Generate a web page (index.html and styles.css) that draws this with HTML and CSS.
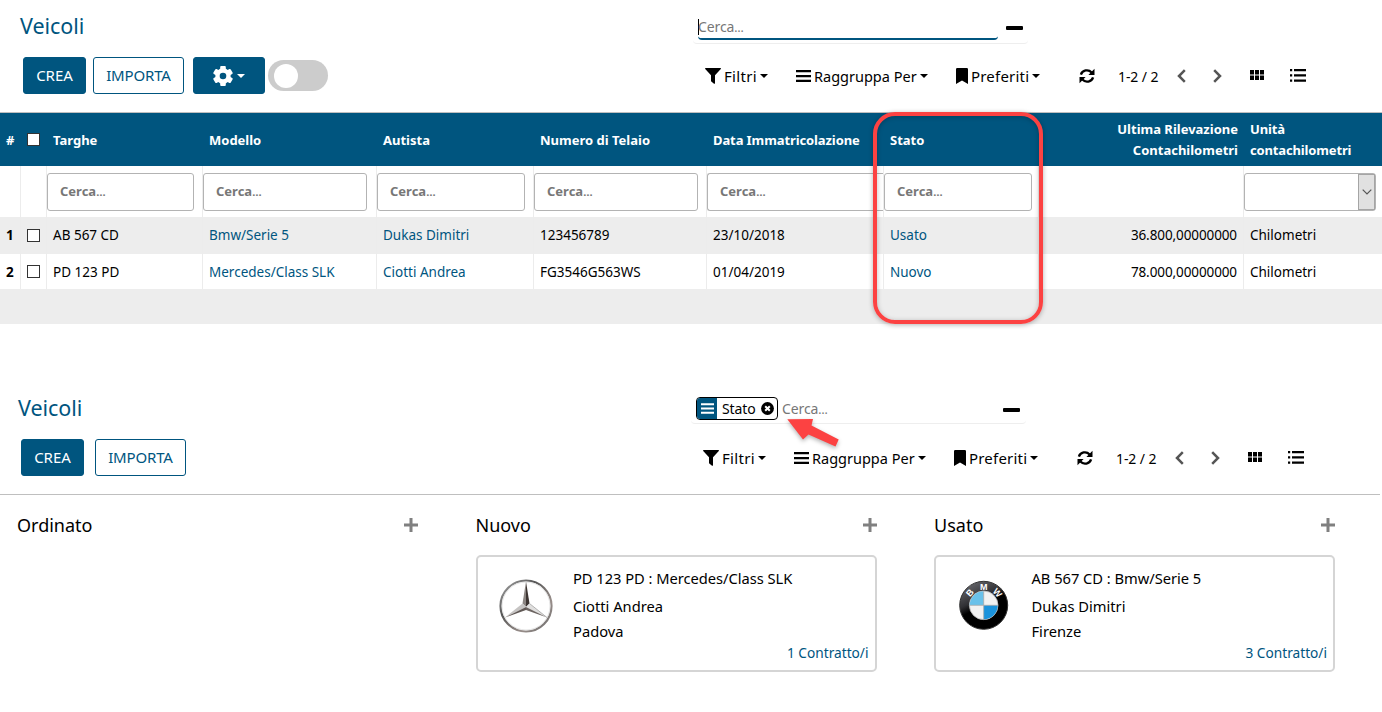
FILE: index.html
```html
<!DOCTYPE html>
<html lang="it">
<head>
<meta charset="utf-8">
<title>Veicoli</title>
<link rel="stylesheet" href="styles.css">
</head>
<body>
<svg class="defs" width="0" height="0">
  <symbol id="funnel" viewBox="0 0 16 16"><path d="M.6 0h14.8q.9.2.4 1L10 7.2V15.200q-.2.8-1 .5L6.300 13.500Q6 13.200 6 12.800V7.200L.2 1Q-.2.2.6 0z"/></symbol>
  <symbol id="bars" viewBox="0 0 15 12"><path d="M0 0h15v2.300H0zM0 4.900h15v2.300H0zM0 9.700h15V12H0z"/></symbol>
  <symbol id="bookmark" viewBox="0 0 12 16"><path d="M1.200 0h9.600Q12 0 12 1.200V16l-6-3.500L0 16V1.200Q0 0 1.200 0z"/></symbol>
  <symbol id="caret" viewBox="0 0 8 4"><path d="M0 0h8L4 4z"/></symbol>
  <symbol id="refresh" viewBox="0 0 16 16"><g fill="none" stroke="currentColor" stroke-width="2.300"><path d="M1.900 6.600A6.200 5.800 0 0 1 12.600 4.400"/><path d="M14.100 9.400A6.200 5.800 0 0 1 3.400 11.600"/></g><path d="M15.500.8v6.100H9.400zM.5 15.200V9.100h6.100z"/></symbol>
  <symbol id="left" viewBox="0 0 9 14"><path d="M7.800 1.200L2 7l5.800 5.800" fill="none" stroke="#555" stroke-width="2.500"/></symbol>
  <symbol id="right" viewBox="0 0 9 14"><path d="M1.200 1.200L7 7l-5.800 5.800" fill="none" stroke="#555" stroke-width="2.500"/></symbol>
  <symbol id="grid" viewBox="0 0 14 10"><path d="M0 0h4v4.500H0zM5 0h4v4.500H5zM10 0h4v4.500h-4zM0 5.500h4V10H0zM5 5.500h4V10H5zM10 5.500h4V10h-4z"/></symbol>
  <symbol id="list" viewBox="0 0 16 13"><path d="M0 0h2.200v2.200H0zM4 0h12v2.200H4zM0 5.300h2.200v2.200H0zM4 5.300h12v2.200H4zM0 10.600h2.200v2.200H0zM4 10.600h12v2.200H4z"/></symbol>
  <symbol id="plus" viewBox="0 0 14 14"><path d="M5.500 0h3v5.500H14v3H8.500V14h-3V8.500H0v-3h5.500z"/></symbol>
</svg>

<section class="list-view">
  <header class="control-panel">
    <div class="panel-left">
      <h1 class="title">Veicoli</h1>
      <div class="buttons">
        <button class="btn btn-primary crea">CREA</button>
        <button class="btn btn-outline importa">IMPORTA</button>
        <button class="btn btn-primary gear">
          <svg width="22" height="22" viewBox="-11 -11 22 22"><g fill="#fff"><circle r="7.700"/><g id="teeth"><rect x="-2.800" y="-10" width="5.600" height="20" rx="1"/><rect x="-2.800" y="-10" width="5.600" height="20" rx="1" transform="rotate(60)"/><rect x="-2.800" y="-10" width="5.600" height="20" rx="1" transform="rotate(120)"/></g></g><circle r="3.300" fill="#00557f"/></svg>
          <svg width="8" height="4"><use href="#caret"/></svg>
        </button>
        <span class="toggle"><span class="knob"></span></span>
      </div>
    </div>
    <div class="panel-right">
      <div class="search">
        <div class="search-input focused"><span class="cursor"></span><span class="ph">Cerca<i>…</i></span></div>
        <span class="minus"></span>
      </div>
      <nav class="toolbar">
        <span class="tool filtri"><svg width="16" height="16"><use href="#funnel"/></svg><b>Filtri</b><svg width="8" height="4"><use href="#caret"/></svg></span>
        <span class="tool raggruppa"><svg width="15" height="12"><use href="#bars"/></svg><b>Raggruppa Per</b><svg width="8" height="4"><use href="#caret"/></svg></span>
        <span class="tool preferiti"><svg width="12" height="16"><use href="#bookmark"/></svg><b>Preferiti</b><svg width="8" height="4"><use href="#caret"/></svg></span>
        <svg class="i-refresh" width="16" height="16"><use href="#refresh"/></svg>
        <span class="pager">1-2 / 2</span>
        <svg class="i-left" width="9" height="14"><use href="#left"/></svg>
        <svg class="i-right" width="9" height="14"><use href="#right"/></svg>
        <svg class="i-grid" width="14" height="10"><use href="#grid"/></svg>
        <svg class="i-list" width="16" height="13"><use href="#list"/></svg>
      </nav>
    </div>
  </header>

  <div class="table">
    <div class="row head">
      <span class="num">#</span><span class="chk"><i class="box"></i></span><span>Targhe</span><span>Modello</span><span>Autista</span><span>Numero di Telaio</span><span class="t-data">Data Immatricolazione</span><span>Stato</span><span class="right">Ultima Rilevazione<br>Contachilometri</span><span class="unit">Unità<br>contachilometri</span>
    </div>
    <div class="row filters">
      <span></span><span></span>
      <span><em class="f w147">Cerca<i>…</i></em></span>
      <span><em class="f w164">Cerca<i>…</i></em></span>
      <span><em class="f w148">Cerca<i>…</i></em></span>
      <span><em class="f w164">Cerca<i>…</i></em></span>
      <span><em class="f w176">Cerca<i>…</i></em></span>
      <span><em class="f w148">Cerca<i>…</i></em></span>
      <span></span>
      <span><em class="select"><span class="drop"><svg width="10" height="6" viewBox="0 0 10 6"><path d="M.7.7L5 5 9.300.7" fill="none" stroke="#555" stroke-width="1.200"/></svg></span></em></span>
    </div>
    <div class="row gray">
      <span class="num">1</span><span class="chk"><i class="box"></i></span><span>AB 567 CD</span><span class="link">Bmw/Serie 5</span><span class="link">Dukas Dimitri</span><span>123456789</span><span>23/10/2018</span><span class="link">Usato</span><span class="right">36.800,00000000</span><span>Chilometri</span>
    </div>
    <div class="row white">
      <span class="num">2</span><span class="chk"><i class="box"></i></span><span>PD 123 PD</span><span class="link">Mercedes/Class SLK</span><span class="link">Ciotti Andrea</span><span>FG3546G563WS</span><span>01/04/2019</span><span class="link">Nuovo</span><span class="right">78.000,00000000</span><span>Chilometri</span>
    </div>
    <div class="row footer"></div>
    <div class="highlight"></div>
  </div>
</section>

<section class="kanban-view">
  <header class="control-panel">
    <div class="panel-left">
      <h1 class="title">Veicoli</h1>
      <div class="buttons">
        <button class="btn btn-primary crea">CREA</button>
        <button class="btn btn-outline importa">IMPORTA</button>
      </div>
    </div>
    <div class="panel-right">
      <div class="search">
        <span class="facet"><span class="facet-icon"><svg width="13" height="11"><use href="#bars"/></svg></span><span class="facet-text">Stato</span><svg width="13" height="13" viewBox="0 0 13 13"><circle cx="6.500" cy="6.500" r="6.400"/><path d="M4.200 4.200l4.600 4.600M8.800 4.200L4.200 8.800" stroke="#fff" stroke-width="2"/></svg></span>
        <div class="search-input"><span class="ph">Cerca<i>…</i></span></div>
        <span class="minus"></span>
      </div>
      <nav class="toolbar">
        <span class="tool filtri"><svg width="16" height="16"><use href="#funnel"/></svg><b>Filtri</b><svg width="8" height="4"><use href="#caret"/></svg></span>
        <span class="tool raggruppa"><svg width="15" height="12"><use href="#bars"/></svg><b>Raggruppa Per</b><svg width="8" height="4"><use href="#caret"/></svg></span>
        <span class="tool preferiti"><svg width="12" height="16"><use href="#bookmark"/></svg><b>Preferiti</b><svg width="8" height="4"><use href="#caret"/></svg></span>
        <svg class="i-refresh" width="16" height="16"><use href="#refresh"/></svg>
        <span class="pager">1-2 / 2</span>
        <svg class="i-left" width="9" height="14"><use href="#left"/></svg>
        <svg class="i-right" width="9" height="14"><use href="#right"/></svg>
        <svg class="i-grid" width="14" height="10"><use href="#grid"/></svg>
        <svg class="i-list" width="16" height="13"><use href="#list"/></svg>
      </nav>
    </div>
    <svg class="arrow" width="60" height="40" viewBox="0 0 60 40"><path d="M3.300 5.300L29 5l-1.500 6.600L54.700 25.500l-3.200 7L24.500 20.500 19 25.500z" fill="#fc4242"/></svg>
  </header>

  <div class="board">
    <div class="column">
      <div class="column-head"><span>Ordinato</span><svg width="14" height="14"><use href="#plus"/></svg></div>
    </div>
    <div class="column">
      <div class="column-head"><span>Nuovo</span><svg width="14" height="14"><use href="#plus"/></svg></div>
      <article class="card">
        <svg class="logo" width="56" height="56" viewBox="-28 -28 56 56">
          <defs><linearGradient id="chrome" x1="0" y1="0" x2="1" y2="1"><stop offset="0" stop-color="#aaa"/><stop offset=".35" stop-color="#555"/><stop offset=".7" stop-color="#998f8b"/><stop offset="1" stop-color="#666"/></linearGradient></defs>
          <circle r="25.500" fill="none" stroke="url(#chrome)" stroke-width="2.200"/>
          <circle r="24" fill="none" stroke="#ddd" stroke-width=".8"/>
          <path d="M0-24.500L-3.500-2.500 0 1z" fill="#8b8582"/><path d="M0-24.500L3.500-2.500 0 1z" fill="#3d3532"/>
          <path d="M-3.500-2.500L0 1-21 11.500z" fill="#c6c4c3"/><path d="M-21 11.500L0 1v3z" fill="#605855"/>
          <path d="M3.500-2.500L0 1 21 11.500z" fill="#e0dfde"/><path d="M21 11.500L0 1v3z" fill="#6d6562"/>
          <path d="M3.500-2.500L21 11.500" stroke="#999" stroke-width=".7"/>
        </svg>
        <div class="info"><p class="name">PD 123 PD : Mercedes/Class SLK</p><p>Ciotti Andrea</p><p>Padova</p><a>1 Contratto/i</a></div>
      </article>
    </div>
    <div class="column">
      <div class="column-head"><span>Usato</span><svg width="14" height="14"><use href="#plus"/></svg></div>
      <article class="card">
        <svg class="logo" width="56" height="56" viewBox="-28 -28 56 56">
          <defs><linearGradient id="ring" x1="0" y1="0" x2=".5" y2="1"><stop offset="0" stop-color="#77777c"/><stop offset=".45" stop-color="#303034"/><stop offset=".6" stop-color="#000"/></linearGradient></defs>
          <g transform="translate(-.300 -.700)">
          <circle r="24" fill="url(#ring)" stroke="#333" stroke-width="1"/>
          <circle r="14.300" fill="#f2f2f2" stroke="#bbb" stroke-width=".8"/>
          <path d="M0 0V-14A14 14 0 0 0-14 0z" fill="#69c1ea"/><path d="M0 0V14A14 14 0 0 0 14 0z" fill="#1b93dc"/>
          <path d="M0-14V14M-14 0H14" stroke="#aaa" stroke-width=".8"/>
          <g class="bmw"><text y="-15.500" transform="rotate(-48)">B</text><text y="-15.500">M</text><text y="-15.500" transform="rotate(48)">W</text></g>
          </g>
        </svg>
        <div class="info"><p class="name">AB 567 CD : Bmw/Serie 5</p><p>Dukas Dimitri</p><p>Firenze</p><a>3 Contratto/i</a></div>
      </article>
    </div>
  </div>
</section>
</body>
</html>
```
FILE: styles.css
```css
* { box-sizing: border-box; }
body { margin: 0; background: #fff; color: #000; font: 13.5px/21px "Noto Sans", "Open Sans", sans-serif; overflow: hidden; }
.defs { display: block; height: 0; }
svg { flex: none; display: block; fill: currentColor; overflow: visible; }
i, em { font-style: normal; }

.list-view { height: 382px; }
.control-panel { display: flex; height: 113px; border-bottom: 1px solid #bfbfbf; position: relative; }
.panel-left { width: 693px; flex: none; padding-left: 20px; }
.title { margin: 10px 0 16px; font-size: 21.5px; line-height: 31px; font-weight: 400; letter-spacing: -.05px; color: #00557f; }
.buttons { display: flex; align-items: flex-start; padding-left: 3px; }
.btn { font: 15px/35px "Noto Sans", "Open Sans", sans-serif; height: 37px; padding: 0; border: 1px solid #00557f; border-radius: 3px; text-align: center; }
.btn-primary { background: #00557f; color: #fff; }
.btn-outline { background: #fff; color: #00557f; }
.crea { width: 63px; }
.importa { width: 91px; margin-left: 7px; letter-spacing: -.15px; }
.gear { width: 72px; margin-left: 9px; display: flex; align-items: center; padding-left: 18px; gap: 3px; }
.toggle { width: 60px; height: 31px; margin: 3px 0 0 3px; border-radius: 16px; background: #ccc; padding: 4px 6px; }
.knob { display: block; width: 24px; height: 24px; border-radius: 50%; background: #fff; }

.panel-right { flex: none; width: 640px; }
.search { display: flex; width: 335px; height: 44px; padding-left: 5px; border-bottom: 1px solid #eee; border-radius: 4px; }
.search-input { display: flex; width: 300px; height: 40px; padding-top: 15px; }
.focused { border-bottom: 2px solid #00557f; border-radius: 4px; }
.cursor { width: 1px; height: 16px; background: #000; margin: 4px -1px 0 0; }
.ph { color: #777; font-size: 14px; line-height: 24px; letter-spacing: -.1px; }
.ph i { letter-spacing: -4px; font-size: 12px; }
.minus { width: 17px; height: 4px; border-radius: 1px; background: #000; margin: 26px 0 0 8px; }
.toolbar { display: flex; align-items: center; height: 30px; margin-top: 17px; padding-left: 12px; }
.tool { display: flex; align-items: center; }
.tool b { font-weight: 400; font-size: 15px; white-space: nowrap; }
.filtri { width: 91px; }
.filtri b { width: 36px; margin-left: 3px; letter-spacing: .3px; }
.raggruppa { width: 160px; }
.raggruppa b { width: 106px; margin-left: 3px; font-size: 14.5px; }
.preferiti { width: 124px; }
.preferiti b { width: 61px; margin-left: 3px; letter-spacing: .2px; }
.i-refresh { margin-left: -1px; }
.pager { width: 60px; margin-left: 23px; font-size: 14px; letter-spacing: -.1px; }
.i-left { margin-left: -1px; }
.i-right { margin-left: 27px; }
.i-grid { margin: -3px 0 0 28px; }
.i-list { margin: -2px 0 0 26px; }

.table { position: relative; }
.row { display: grid; grid-template-columns: 21px 26px 156px 174px 157px 173px 177px 155px 205px 138px; }
.row > span { display: flex; align-items: center; padding-left: 6px; border-right: 1px solid #ececec; white-space: nowrap; }
.row > span:last-child { border-right: 0; }
.row > .right { justify-content: flex-end; text-align: right; padding-right: 6px; }
.gray > .right, .white > .right { letter-spacing: -.1px; }
.row > .num { font-weight: 700; padding-left: 6px; }
.head { height: 53px; background: #00557f; color: #fff; font-weight: 700; font-size: 13px; }
.head > span { border-color: transparent !important; padding-top: 1px; }
.head > .right { padding-right: 5px; padding-top: 0; letter-spacing: 0; }
.head > .unit { letter-spacing: -.15px; padding-top: 0; }
.head > .t-data { letter-spacing: -.1px; }
.box { width: 13px; height: 13px; border: 1px solid #333; background: #fff; }
.head .box { margin-top: -2px; }
.filters { height: 51px; }
.filters > span { padding: 0; }
.f { height: 38px; border: 1px solid #b3b3b3; border-radius: 3px; padding-left: 12px; color: #777; font-size: 13px; font-weight: 700; line-height: 35px; }
.f i { letter-spacing: -4px; font-size: 11px; }
.w147 { width: 147px; }
.w148 { width: 148px; }
.w164 { width: 164px; }
.w176 { width: 176px; border-right: 0; border-radius: 3px 0 0 3px; }
.select { display: flex; justify-content: flex-end; width: 132px; height: 38px; border: 1px solid #b3b3b3; border-radius: 3px; }
.drop { display: flex; align-items: center; justify-content: center; width: 17px; background: #e1e1e1; border: 1px solid #a5a5a5; }
.gray { height: 37px; background: #ededed; }
.white { height: 35px; }
.white > span { padding-top: 2px; }
.white .box { margin-top: -2px; }
.footer { height: 35px; background: #ededed; }
.link { color: #00557f; }
.highlight { position: absolute; left: 873px; top: -1px; width: 170px; height: 212px; border: 4px solid #fc4242; border-radius: 22px; box-shadow: 0 1px 5px rgba(0, 0, 0, .3), inset 0 1px 5px rgba(0, 0, 0, .25); }

.kanban-view { width: 1380px; }
.kanban-view .panel-left { width: 691px; padding-left: 18px; }
.kanban-view .importa { margin-left: 11px; }
.kanban-view .search { height: 42px; }
.kanban-view .toolbar { margin-top: 19px; }
.facet { display: flex; align-items: center; width: 82px; height: 23px; margin-top: 15px; border: 1px solid #000; border-radius: 4px; overflow: hidden; flex: none; }
.facet-icon { display: flex; align-items: center; justify-content: center; width: 20px; height: 21px; background: #00557f; color: #fff; margin-right: 5px; }
.facet-text { width: 39px; font-size: 14px; line-height: 19px; letter-spacing: -.1px; margin-top: -1px; }
.facet > svg { margin-top: -1px; }
.kanban-view .search-input { width: 218px; padding-left: 4px; }
.kanban-view .minus { margin-left: 7px; }
.arrow { position: absolute; left: 784px; top: 32px; filter: drop-shadow(0 2px 2px rgba(0, 0, 0, .3)); }

.board { display: grid; grid-template-columns: repeat(3, 401px); column-gap: 57.500px; padding-left: 17px; }
.column-head { display: flex; align-items: center; justify-content: space-between; height: 60px; font-size: 18px; }
.column-head svg { color: #808080; }
.card { display: flex; height: 117px; border: 2px solid #d5d5d5; border-radius: 5px; }
.logo { margin: 21px 0 0 20px; }
.info { display: flex; flex-direction: column; flex: 1; padding: 9px 6px 0 19.500px; font-size: 14.700px; }
.info p { margin: 0; line-height: 25px; }
.info .name { margin-bottom: 3px; letter-spacing: -.03px; }
.info a { align-self: flex-end; color: #00557f; font-size: 13.7px; line-height: 19px; margin-top: -1px; }
.bmw { fill: #fff; font: 700 9px "Liberation Sans", sans-serif; text-anchor: middle; }
```
